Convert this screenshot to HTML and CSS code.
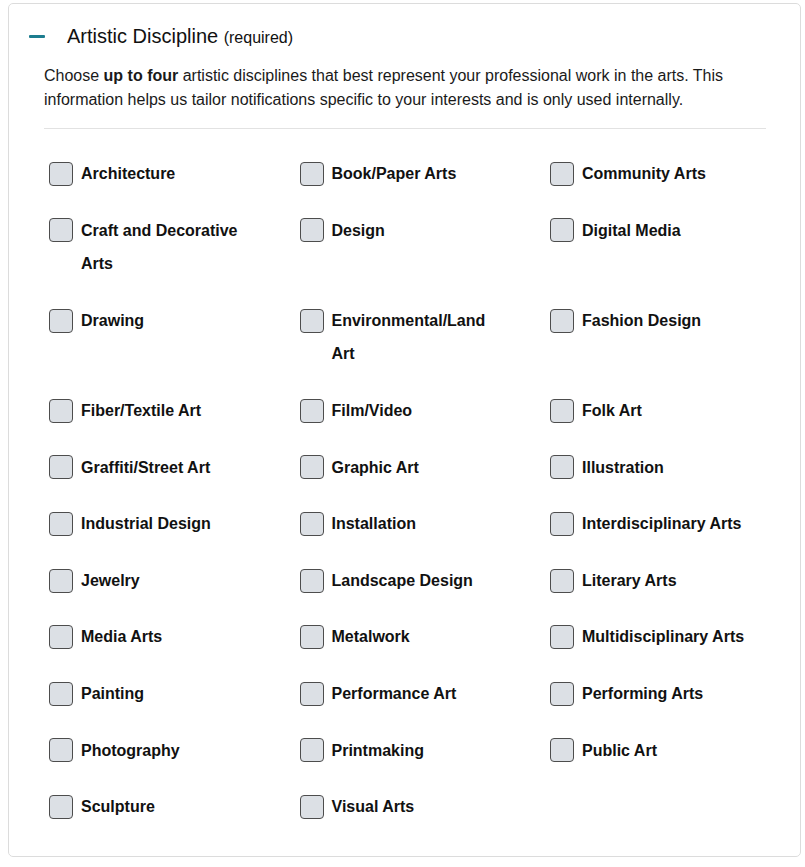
FILE: index.html
```html
<!DOCTYPE html>
<html lang="en">
<head>
    <meta charset="UTF-8">
    <meta name="viewport" content="width=device-width, initial-scale=1.0">
    <title>Artistic Discipline</title>
    <link rel="stylesheet" href="styles.css">
</head>
<body>

    <!-- Artistic Discipline panel -->
    <fieldset class="panel">
        <div class="panel-header">
            <span class="collapse-icon"></span>
            <h2 class="panel-title">Artistic Discipline <small>(required)</small></h2>
        </div>

        <div class="panel-body">
            <p class="intro">Choose <strong>up to four</strong> artistic disciplines that best represent your professional work in the arts. This information helps us tailor notifications specific to your interests and is only used internally.</p>

            <div class="discipline-list">
                <label class="discipline"><input type="checkbox" name="discipline" value="architecture"><span>Architecture</span></label>
                <label class="discipline"><input type="checkbox" name="discipline" value="book-paper-arts"><span>Book/Paper Arts</span></label>
                <label class="discipline"><input type="checkbox" name="discipline" value="community-arts"><span>Community Arts</span></label>

                <label class="discipline"><input type="checkbox" name="discipline" value="craft"><span>Craft and Decorative Arts</span></label>
                <label class="discipline"><input type="checkbox" name="discipline" value="design"><span>Design</span></label>
                <label class="discipline"><input type="checkbox" name="discipline" value="digital-media"><span>Digital Media</span></label>

                <label class="discipline"><input type="checkbox" name="discipline" value="drawing"><span>Drawing</span></label>
                <label class="discipline"><input type="checkbox" name="discipline" value="environmental"><span>Environmental/Land Art</span></label>
                <label class="discipline"><input type="checkbox" name="discipline" value="fashion-design"><span>Fashion Design</span></label>

                <label class="discipline"><input type="checkbox" name="discipline" value="fiber"><span>Fiber/Textile Art</span></label>
                <label class="discipline"><input type="checkbox" name="discipline" value="film-video"><span>Film/Video</span></label>
                <label class="discipline"><input type="checkbox" name="discipline" value="folk-art"><span>Folk Art</span></label>

                <label class="discipline"><input type="checkbox" name="discipline" value="graffiti"><span>Graffiti/Street Art</span></label>
                <label class="discipline"><input type="checkbox" name="discipline" value="graphic-art"><span>Graphic Art</span></label>
                <label class="discipline"><input type="checkbox" name="discipline" value="illustration"><span>Illustration</span></label>

                <label class="discipline"><input type="checkbox" name="discipline" value="industrial-design"><span>Industrial Design</span></label>
                <label class="discipline"><input type="checkbox" name="discipline" value="installation"><span>Installation</span></label>
                <label class="discipline"><input type="checkbox" name="discipline" value="interdisciplinary"><span>Interdisciplinary Arts</span></label>

                <label class="discipline"><input type="checkbox" name="discipline" value="jewelry"><span>Jewelry</span></label>
                <label class="discipline"><input type="checkbox" name="discipline" value="landscape-design"><span>Landscape Design</span></label>
                <label class="discipline"><input type="checkbox" name="discipline" value="literary-arts"><span>Literary Arts</span></label>

                <label class="discipline"><input type="checkbox" name="discipline" value="media-arts"><span>Media Arts</span></label>
                <label class="discipline"><input type="checkbox" name="discipline" value="metalwork"><span>Metalwork</span></label>
                <label class="discipline"><input type="checkbox" name="discipline" value="multidisciplinary"><span>Multidisciplinary Arts</span></label>

                <label class="discipline"><input type="checkbox" name="discipline" value="painting"><span>Painting</span></label>
                <label class="discipline"><input type="checkbox" name="discipline" value="performance-art"><span>Performance Art</span></label>
                <label class="discipline"><input type="checkbox" name="discipline" value="performing-arts"><span>Performing Arts</span></label>

                <label class="discipline"><input type="checkbox" name="discipline" value="photography"><span>Photography</span></label>
                <label class="discipline"><input type="checkbox" name="discipline" value="printmaking"><span>Printmaking</span></label>
                <label class="discipline"><input type="checkbox" name="discipline" value="public-art"><span>Public Art</span></label>

                <label class="discipline"><input type="checkbox" name="discipline" value="sculpture"><span>Sculpture</span></label>
                <label class="discipline"><input type="checkbox" name="discipline" value="visual-arts"><span>Visual Arts</span></label>
            </div>
        </div>
    </fieldset>

</body>
</html>
```

FILE: styles.css
```css
body {
    font-family: "Liberation Sans", Arial, sans-serif;
    margin: 3px 4px 0 8px;
    background-color: #fff;
    color: #111;
}
.panel {
    margin: 0;
    padding: 21px 34px 32px 20px;
    border: 1px solid #dcdcdc;
    border-radius: 5px;
    min-width: 0;
}
.panel-header {
    display: flex;
    align-items: center;
    height: 24px;
}
.collapse-icon {
    display: block;
    width: 16px;
    height: 3px;
    margin-top: -2px;
    background-color: #1d7d8f;
    border-radius: 1px;
}
.panel-title {
    margin: 0 0 0 22px;
    font-size: 20px;
    font-weight: normal;
    line-height: 24px;
    color: #111;
}
.panel-title small {
    font-size: 16px;
}
.panel-body {
    padding-left: 15px;
}
.intro {
    margin: 15px 0 0;
    font-size: 16px;
    line-height: 24px;
    color: #1a1a1a;
    padding-bottom: 16px;
    border-bottom: 1px solid #e2e2e2;
}
.discipline-list {
    display: grid;
    grid-template-columns: repeat(3, 250.5px);
    row-gap: 23px;
    margin-top: 28px;
}
.discipline {
    display: flex;
    align-items: flex-start;
    gap: 8px;
    padding-left: 5px;
    font-size: 16px;
    font-weight: bold;
    line-height: 33.6px;
    cursor: pointer;
}
.discipline span {
    max-width: 172px;
}
.discipline input {
    appearance: none;
    -webkit-appearance: none;
    flex: none;
    width: 24px;
    height: 24px;
    margin: 4.8px 0 0;
    border: 1px solid #4d4d4d;
    border-radius: 4px;
    background-color: #dce0e5;
    cursor: pointer;
}
.discipline input:checked {
    background-color: #1d7d8f;
}
```
